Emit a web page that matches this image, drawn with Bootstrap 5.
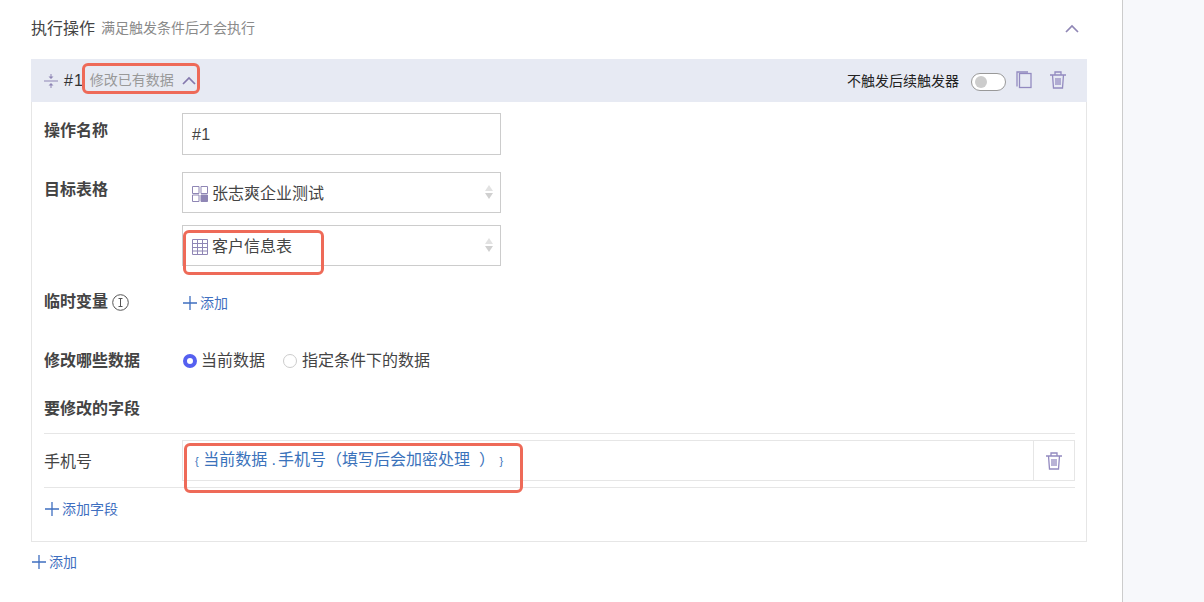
<!DOCTYPE html>
<html lang="zh">
<head>
<meta charset="utf-8">
<title>执行操作</title>
<link href="https://cdn.jsdelivr.net/npm/bootstrap@5.3.0/dist/css/bootstrap.min.css" rel="stylesheet">
<style>
html,body{height:602px;overflow:hidden}
body{font-family:"Liberation Sans","Noto Sans CJK SC",sans-serif;color:#333;background:#fff;font-size:15px}
.shell{height:602px}
.mainpane{width:1123px;border-right:1px solid #ccc;padding:0 35px 0 31px;position:relative;background:#fff}
.sidepane{background:#f7f8fb}
.sec-head{height:59px;padding:0 8px 2px 0}
.sec-title{font-size:16px;color:#444;line-height:22px}
.sec-sub{font-size:14px;color:#8a8a8a;margin-left:6px}
.op-head{height:43px;background:#e7eaf3;padding:0 20px 0 13px}
.op-num{font-size:16px;color:#333;margin-left:6px;letter-spacing:1px}
.op-type{font-size:14px;color:#999;margin-left:6px}
.no-trigger{font-size:14px;color:#222;padding-top:2px}
.switcher{width:35px;height:18px;border:1px solid #999;border-radius:9px;background:#fff;margin-left:12px;padding:2px 0 0 3px;display:block;margin-top:2px}
.switcher i{display:block;width:12px;height:12px;border-radius:50%;background:#ccc}
.op-body{border:1px solid #e6e6e6;border-top:0;padding:11px 11px 0 12px;height:440px}
.frow{display:flex}
.flabel{width:138px;flex:none;font-size:16px;font-weight:700;color:#444}
.lab-shift{padding-top:6px}
.tbox{width:319px;height:42px;border:1px solid #ccc;padding:2px 9px 0;font-size:16px;color:#444;display:flex;align-items:center;letter-spacing:.3px}
.tbox.sel{height:41px;position:relative;gap:4px;letter-spacing:0}
.updown{position:absolute;right:7px;top:12px;display:flex;flex-direction:column;gap:2px}
.updown b{display:block;width:0;height:0;border-left:4px solid transparent;border-right:4px solid transparent}
.updown b:first-child{border-bottom:6px solid #e2e2e2}
.updown b:last-child{border-top:6px solid #d0d0d0}
.add-link{color:#3f6fc0;font-size:14px;display:inline-flex;align-items:center;gap:3px;text-decoration:none;line-height:20px}
.nudge{margin-left:1px}
.radio-lab{font-size:16px;color:#444;display:inline-flex;align-items:center;gap:4px}
.radio-lab.second{gap:5px}
.radio-wrap{gap:18px;margin-left:1px;margin-top:4px}
.rdot{width:14px;height:14px;border-radius:50%;display:block;border:1px solid #ccc;background:#fff}
.rdot.on{border:4px solid #5560f0}
.linebar{border-top:1px solid #e6e6e6}
.field-cell{border:1px solid #e6e6e6;height:41px;display:flex;margin-left:138px}
.expr{flex:1;color:#3a72bb;font-size:16px;padding:0 0 0 12px;line-height:38px;white-space:pre}
.expr small{font-size:11px}
.dotgap{padding-right:2px}
.del-cell{width:41px;border-left:1px solid #e6e6e6;display:flex;align-items:center;justify-content:center}
.redbox{position:absolute;border:3px solid #ee6a58;border-radius:6px;pointer-events:none}
.rb1{left:82px;top:63px;width:118px;height:31px}
.rb2{left:183px;top:230px;width:141px;height:45px}
.rb3{left:184px;top:443px;width:339px;height:50px}
svg{display:block;flex:none}
</style>
</head>
<body>
<div class="shell d-flex">
<div class="mainpane flex-shrink-0">
  <div class="sec-head d-flex align-items-center justify-content-between">
    <div class="d-flex align-items-center"><span class="sec-title">执行操作</span><span class="sec-sub">满足触发条件后才会执行</span></div>
    <svg width="14" height="9" viewBox="0 0 14 9" fill="none" stroke="#8f86b5" stroke-width="1.700"><path d="M1 8 7 2l6 6"/></svg>
  </div>
  <div class="op-head d-flex align-items-center justify-content-between">
    <div class="d-flex align-items-center">
      <svg width="14" height="16" viewBox="0 0 14 16" fill="none" stroke="#8f86b5"><path d="M0 8h14M7 1v3.500M7 11.500V15"/><path d="M4.500 3.500 7 6l2.500-2.500M4.500 12.500 7 10l2.500 2.500" fill="#8f86b5" stroke="none"/></svg>
      <span class="op-num">#1</span><span class="op-type">修改已有数据</span>
      <svg class="ms-2" width="14" height="9" viewBox="0 0 14 9" fill="none" stroke="#8478ad" stroke-width="1.700"><path d="M1 8 7 2l6 6"/></svg>
    </div>
    <div class="d-flex align-items-center">
      <span class="no-trigger">不触发后续触发器</span>
      <span class="switcher"><i></i></span>
      <svg style="margin-left:10px;margin-top:-2px" width="16" height="18" viewBox="0 0 16 18" fill="none" stroke="#938ac0" stroke-width="1.300"><path d="M1 15.500V1h11"/><rect x="3.500" y="2.500" width="11.500" height="14"/></svg>
      <svg style="margin-left:17px;margin-top:-2px" width="18" height="18" viewBox="0 0 18 18" fill="none" stroke="#938ac0" stroke-width="1.300"><path d="M1 4h16M6 4V1h6v3M3.500 4l1 13h9l1-13M7 7v7M9 7v7M11 7v7"/></svg>
    </div>
  </div>
  <div class="op-body">
    <div class="frow"><div class="flabel lab-shift">操作名称</div><div class="tbox">#1</div></div>
    <div class="frow" style="margin-top:17px"><div class="flabel lab-shift">目标表格</div><div class="tbox sel">
      <svg width="16" height="16" viewBox="0 0 16 16" fill="none" stroke="#8f86b5"><path d="M.5.500h6.500v7H.5zM9 .500h6.500v7H9zM.5 9h6.500v6.500H.5z"/><path d="M9 9h6.500v6.500H9z" fill="#8f86b5"/></svg>张志爽企业测试<span class="updown"><b></b><b></b></span></div></div>
    <div class="frow" style="margin-top:12px"><div class="flabel"></div><div class="tbox sel">
      <svg width="16" height="16" viewBox="0 0 16 16" fill="none" stroke="#8f86b5"><path d="M.5.500h15v15H.5zM.5 4.500h15M.5 8.500h15M.5 12h15M5.500 .500v15M10.500 .500v15"/></svg>客户信息表<span class="updown"><b></b><b></b></span></div></div>
    <div class="frow align-items-center" style="margin-top:22px;height:30px"><div class="flabel d-flex align-items-center gap-1" style="margin-top:-2px">临时变量 <svg width="17" height="17" viewBox="0 0 17 17" fill="none" stroke="#555"><circle cx="8.500" cy="8.500" r="7.800"/><path d="M6.500 4.500h4M8.500 4.500v8M6.500 12.500h4"/></svg></div>
      <a class="add-link nudge" href="#"><svg width="14" height="14" viewBox="0 0 14 14" stroke="#3f6fc0" stroke-width="1.300"><path d="M0 7h14M7 0v14"/></svg>添加</a></div>
    <div class="frow align-items-center" style="margin-top:26px;height:30px"><div class="flabel" style="margin-top:4px">修改哪些数据</div>
      <div class="d-flex radio-wrap"><span class="radio-lab"><i class="rdot on"></i>当前数据</span><span class="radio-lab second"><i class="rdot"></i>指定条件下的数据</span></div></div>
    <div class="flabel" style="margin-top:22px;line-height:26px;height:26px;width:auto">要修改的字段</div>
    <div class="linebar" style="margin-top:11px"></div>
    <div class="position-relative" style="padding-top:6px">
      <div class="d-flex align-items-center" style="position:absolute;top:7px;left:0;height:41px;font-size:16px;color:#444">手机号</div>
      <div class="field-cell"><div class="expr"><small>{</small> 当前数据 .<span class="dotgap"></span>手机号（填写后会加密处理  ） <small>}</small></div>
        <div class="del-cell"><svg width="18" height="18" viewBox="0 0 18 18" fill="none" stroke="#938ac0" stroke-width="1.300"><path d="M1 4h16M6 4V1h6v3M3.500 4l1 13h9l1-13M7 7v7M9 7v7M11 7v7"/></svg></div></div>
    </div>
    <div class="linebar" style="margin-top:6px"></div>
    <div style="margin-top:11px"><a class="add-link nudge" href="#"><svg width="14" height="14" viewBox="0 0 14 14" stroke="#3f6fc0" stroke-width="1.300"><path d="M0 7h14M7 0v14"/></svg>添加字段</a></div>
  </div>
  <div style="margin-top:10px;padding-left:1px"><a class="add-link" href="#"><svg width="14" height="14" viewBox="0 0 14 14" stroke="#3f6fc0" stroke-width="1.300"><path d="M0 7h14M7 0v14"/></svg>添加</a></div>
  <div class="redbox rb1"></div><div class="redbox rb2"></div><div class="redbox rb3"></div>
</div>
<div class="sidepane flex-grow-1"></div>
</div>
<script src="https://cdn.jsdelivr.net/npm/bootstrap@5.3.0/dist/js/bootstrap.bundle.min.js"></script>
</body>
</html>
